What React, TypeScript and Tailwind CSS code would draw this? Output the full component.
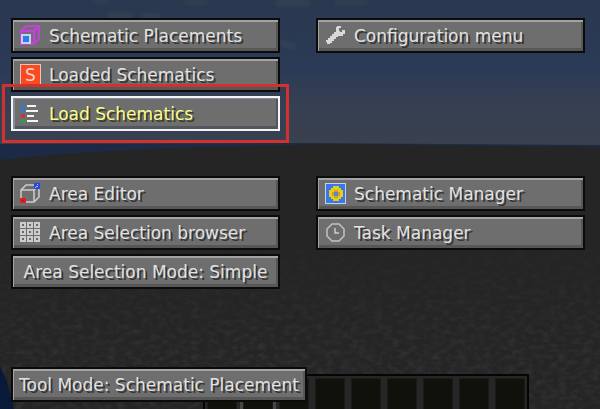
import type { ReactNode } from "react";

const base =
  "relative flex h-[35px] items-center whitespace-nowrap border-2 text-[17px] leading-5";
const idle =
  "border-[#0b0b0c] text-[#e2e2e2] bg-[#6e6e6e] shadow-[inset_1px_2px_0_#a3a3a3,inset_-2px_-3px_0_#575757] [text-shadow:2px_2px_0_#343434]";
const hovered =
  "border-[#f4f5f8] text-[#fbfb92] bg-[#6e6e6e] shadow-[inset_2px_1px_0_#858b96,inset_-2px_-3px_0_#53565c] [text-shadow:2px_2px_0_#3b3b24]";

function MenuButton({
  icon,
  active = false,
  children,
}: {
  icon?: ReactNode;
  active?: boolean;
  children: ReactNode;
}) {
  return (
    <button
      type="button"
      className={`${base} ${active ? hovered : idle} w-full ${icon ? "justify-start gap-[8px] pl-[7px]" : "justify-center"}`}
    >
      {icon}
      <span>{children}</span>
    </button>
  );
}

function Pixels({ smooth = false, children }: { smooth?: boolean; children: ReactNode }) {
  return (
    <svg
      viewBox="0 0 21 21"
      className="size-[21px] shrink-0"
      fill="none"
      shapeRendering={smooth ? "auto" : "crispEdges"}
      aria-hidden="true"
    >
      {children}
    </svg>
  );
}

function PlacementIcon() {
  return (
    <Pixels smooth>
      <path d="M1 6L6 1H19V14L14 19H1Z" fill="#7d6681" />
      <path d="M1 6L6 1H19V14L14 19H1V6H14V19M14 6L19 1" stroke="#c044d6" strokeWidth="2" />
      <path d="M1 9h10v10H1z" fill="#ccd0f0" />
      <path d="M3 11h6v6H3z" fill="#2a7ce6" />
    </Pixels>
  );
}

function LoadedIcon() {
  return (
    <span
      aria-hidden="true"
      className="flex size-[21px] shrink-0 items-center justify-center border border-[#e6c6bf] bg-[#fb4a1f] text-[17px] leading-5 text-[#f6d5c8] [text-shadow:none]"
    >
      S
    </span>
  );
}

function ListIcon() {
  return (
    <Pixels>
      <path d="M1 1h4v3H1zM1 6h4v4H1z" fill="#2f78dc" />
      <path d="M1 11h4v4H1z" fill="#d63230" />
      <path d="M1 16h4v4H1z" fill="#2d9d5c" />
      <path d="M7 2h9v2H7zM6 7h12v2H6zM7 12h7v2H7zM7 17h11v2H7z" fill="#f5f5f5" />
    </Pixels>
  );
}

function AreaIcon() {
  return (
    <Pixels smooth>
      <path
        d="M1 7L6 2H17L19 5V14L14 19H1ZM1 7H14V19M14 7L18 3"
        stroke="#cdcdcd"
        strokeWidth="1.5"
      />
      <path d="M14 0h6v6h-6z" fill="#2447df" />
      <path d="M17 1h1v1h-1zM16 3h2v1h-2zM15 4h1v1h-1z" fill="#b9c7f3" />
      <path d="M0 15h6v5H0z" fill="#e0201e" />
      <path d="M2 17h2v1H2z" fill="#8b2422" />
    </Pixels>
  );
}

function GridIcon() {
  return (
    <Pixels>
      {[0, 7, 14].map((y) =>
        [0, 7, 14].map((x) => (
          <g key={`${x}-${y}`}>
            <rect x={x} y={y} width="6" height="6" fill="#cdcdcd" />
            <rect x={x + 2} y={y + 2} width="2" height="2" fill="#686868" />
          </g>
        )),
      )}
    </Pixels>
  );
}

function WrenchIcon() {
  return (
    <Pixels>
      <path
        d="M12 1H16V3H14V6H15V7H17V5H20V9H18V11H13V12H11V14H9V16H7V18H5V19H2V17H1V15H3V13H5V11H7V9H9V7H11V2H12Z"
        fill="#d9d9d9"
      />
    </Pixels>
  );
}

function ManagerIcon() {
  return (
    <Pixels>
      <path d="M0 0h21v21H0z" fill="#c5cef0" />
      <path d="M1 1h19v19H1z" fill="#3979e3" />
      <path d="M8 3h6v2h2v2h2v7h-2v2h-2v2H8v-2H6v-2H4V7h2V5h2z" fill="#e9cb20" />
      <path d="M9 7h4v2h2v4h-2v2H9v-2H7V9h2z" fill="#d2a519" />
      <path d="M9 9h4v4H9z" fill="#5c86ca" />
    </Pixels>
  );
}

function ClockIcon() {
  return (
    <Pixels smooth>
      <path
        d="M7 2H14L19 7V14L14 19H7L2 14V7Z"
        stroke="#c2c2c2"
        strokeWidth="1.5"
      />
      <path d="M10 6V11H14" stroke="#cccccc" strokeWidth="1.5" />
    </Pixels>
  );
}

function World() {
  return (
    <svg
      viewBox="0 0 600 409"
      preserveAspectRatio="none"
      className="absolute inset-0 size-full"
      aria-hidden="true"
    >
      <defs>
        <linearGradient id="sky" x1="0" y1="0" x2="0" y2="1">
          <stop offset="0" stopColor="#2a3850" />
          <stop offset="0.45" stopColor="#2b3a56" />
          <stop offset="0.72" stopColor="#364052" />
          <stop offset="1" stopColor="#3a404d" />
        </linearGradient>
        <linearGradient id="fade" x1="0" y1="0" x2="0" y2="1">
          <stop offset="0.3" stopColor="#fff" stopOpacity="0" />
          <stop offset="0.8" stopColor="#fff" />
        </linearGradient>
        <mask id="near">
          <rect y="146" width="600" height="263" fill="url(#fade)" />
        </mask>
        <filter id="stone" x="0" y="0" width="1" height="1" colorInterpolationFilters="sRGB">
          <feTurbulence type="fractalNoise" baseFrequency="0.12 0.2" numOctaves="2" seed="4" />
          <feColorMatrix values="0 0 0 0 0.24  0 0 0 0 0.24  0 0 0 0 0.24  1.6 0 0 0 -0.6" />
        </filter>
        <filter id="soft">
          <feGaussianBlur stdDeviation="2" />
        </filter>
      </defs>
      <rect width="600" height="150" fill="url(#sky)" />
      <g fill="#3d4852" opacity="0.6" filter="url(#soft)">
        <path d="M92 0h18v3H92zM184 0h24v4h-24zM276 0h34v6h-34zM335 0h32v4h-32zM108 13h24v6h-24zM142 14h18v5h-18zM280 40l16 5v4l-16-3z" />
      </g>
      <path d="M0 144L300 143L600 145V160H0Z" fill="#1c2a45" />
      <path d="M0 160L60 154L170 148L330 144L600 147V409H0Z" fill="#252525" />
      <g mask="url(#near)">
        <rect y="146" width="600" height="263" filter="url(#stone)" opacity="0.7" />
      </g>
      <path d="M0 366L7 382L14 409H0Z" fill="#081a38" />
    </svg>
  );
}

function Hotbar() {
  return (
    <div
      aria-hidden="true"
      className="absolute bottom-0 left-[203px] flex h-[35px] gap-[6px] overflow-hidden border-x-2 border-t-2 border-[#050505] bg-[#262626] px-[2px] pt-[2px]"
    >
      {Array.from({ length: 9 }, (_, i) => (
        <div
          key={i}
          className={`h-9 w-[30px] shrink-0 border border-[#1b1b19] bg-[#10110a] ${i === 1 ? "outline-3 outline-[#454845]" : ""}`}
        />
      ))}
    </div>
  );
}

export default function App() {
  return (
    <main className="relative flex min-h-screen flex-col overflow-hidden bg-[#252525] pb-[7px] pl-[11px] pr-[15px] pt-[18px] font-['DejaVu_Sans',sans-serif]">
      <World />
      <nav className="relative grid grid-cols-2 gap-x-9 gap-y-[45px]">
        <div className="flex flex-col gap-1">
          <MenuButton icon={<PlacementIcon />}>Schematic Placements</MenuButton>
          <MenuButton icon={<LoadedIcon />}>Loaded Schematics</MenuButton>
          <div className="relative">
            <MenuButton active icon={<ListIcon />}>
              Load Schematics
            </MenuButton>
            <div className="pointer-events-none absolute -inset-x-[9px] -bottom-3 -top-3 border-3 border-[#d1322f]" />
          </div>
        </div>
        <div className="flex flex-col gap-1">
          <MenuButton icon={<WrenchIcon />}>Configuration menu</MenuButton>
        </div>
        <div className="flex flex-col gap-1">
          <MenuButton icon={<AreaIcon />}>Area Editor</MenuButton>
          <MenuButton icon={<GridIcon />}>Area Selection browser</MenuButton>
          <MenuButton>Area Selection Mode: Simple</MenuButton>
        </div>
        <div className="flex flex-col gap-1">
          <MenuButton icon={<ManagerIcon />}>Schematic Manager</MenuButton>
          <MenuButton icon={<ClockIcon />}>Task Manager</MenuButton>
        </div>
      </nav>
      <Hotbar />
      <footer className="mt-auto flex pt-6">
        <button type="button" className={`${base} ${idle} px-[6px]`}>
          Tool Mode: Schematic Placement
        </button>
      </footer>
    </main>
  );
}
